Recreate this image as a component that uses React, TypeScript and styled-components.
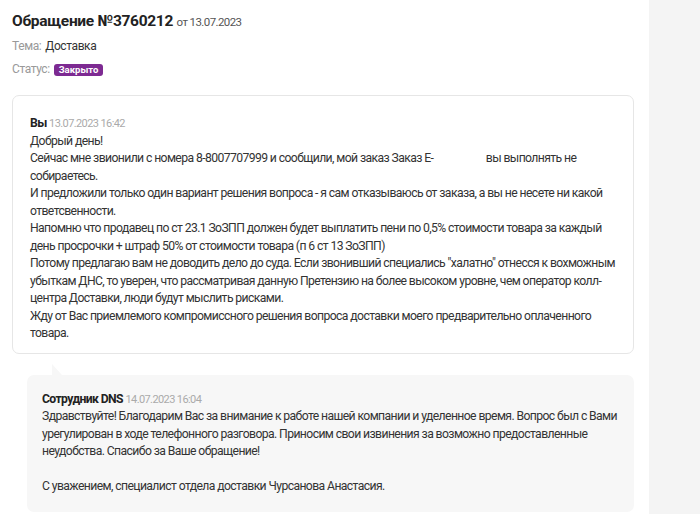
import React from 'react';
import styled, { createGlobalStyle } from 'styled-components';

const GlobalStyle = createGlobalStyle`
  html, body {
    margin: 0;
    padding: 0;
    background: #ffffff;
  }
  body {
    font-family: 'Roboto', 'Liberation Sans', sans-serif;
    color: #333333;
  }
`;

const Page = styled.div`
  display: flex;
  width: 700px;
  height: 514px;
  overflow: hidden;
`;

const Main = styled.div`
  width: 649px;
  box-sizing: border-box;
  padding: 11px 15px 0 12px;
  display: flex;
  flex-direction: column;
`;

const Sidebar = styled.div`
  flex: 1;
  background: #f4f4f4;
`;

const Title = styled.h1`
  margin: 0;
  font-size: 15.5px;
  font-weight: 700;
  letter-spacing: -0.3px;
  color: #222222;
  line-height: 20px;
`;

const TitleDate = styled.span`
  font-size: 11.5px;
  font-weight: 400;
  letter-spacing: -0.6px;
  color: #555555;
`;

const InfoRow = styled.div`
  margin-top: 6px;
  font-size: 12px;
  letter-spacing: -0.4px;
  line-height: 17px;
  color: #333333;
  display: flex;
  align-items: center;
  gap: 4px;
`;

const Label = styled.span`
  color: #999999;
`;

const Badge = styled.span`
  display: inline-block;
  background: #7d2a92;
  color: #ffffff;
  font-size: 9.5px;
  font-weight: 700;
  letter-spacing: 0;
  line-height: 12px;
  padding: 0 5px;
  border-radius: 3px;
`;

const Card = styled.div`
  margin-top: 17px;
  border: 1px solid #e6e6e6;
  border-radius: 7px;
  padding: 19px 17px 10px 17px;
  font-size: 12.2px;
  letter-spacing: -0.6px;
  line-height: 17.5px;
  color: #333333;
  white-space: nowrap;
`;

const ReplyCard = styled.div`
  position: relative;
  margin: 21px 0 0 15px;
  background: #f7f7f7;
  border-radius: 7px;
  padding: 16px 20px 16px 15px;
  font-size: 12.2px;
  letter-spacing: -0.6px;
  line-height: 17.5px;
  color: #333333;
  white-space: nowrap;

  &:before {
    content: '';
    position: absolute;
    top: -11px;
    left: 25px;
    border-bottom: 11px solid #f7f7f7;
    border-right: 10px solid transparent;
  }
`;

const Author = styled.div`
  font-weight: 700;
  color: #222222;
`;

const Time = styled.span`
  font-size: 11px;
  font-weight: 400;
  letter-spacing: -0.6px;
  color: #aaaaaa;
`;

const Line = styled.div<{ $gap?: boolean }>`
  margin-top: ${(p) => (p.$gap ? '17.5px' : '0')};
`;

const Hidden = styled.span`
  display: inline-block;
  width: 50px;
`;

const App = () => (
  <>
    <GlobalStyle />
    <Page>
      <Main>
        <Title>
          Обращение №3760212 <TitleDate>от 13.07.2023</TitleDate>
        </Title>
        <InfoRow>
          <Label>Тема:</Label> Доставка
        </InfoRow>
        <InfoRow>
          <Label>Статус:</Label> <Badge>Закрыто</Badge>
        </InfoRow>
        <Card>
          <Author>
            Вы <Time>13.07.2023 16:42</Time>
          </Author>
          <Line>Добрый день!</Line>
          <Line>
            Сейчас мне звионили с номера 8-8007707999 и сообщили, мой заказ Заказ Е-<Hidden /> вы выполнять не
            <br />
            собираетесь.
          </Line>
          <Line>
            И предложили только один вариант решения вопроса - я сам отказываюсь от заказа, а вы не несете ни какой
            <br />
            ответсвенности.
          </Line>
          <Line>
            Напомню что продавец по ст 23.1 ЗоЗПП должен будет выплатить пени по 0,5% стоимости товара за каждый
            <br />
            день просрочки + штраф 50% от стоимости товара (п 6 ст 13 ЗоЗПП)
          </Line>
          <Line>
            Потому предлагаю вам не доводить дело до суда. Если звонивший специались "халатно" отнесся к вохможным
            <br />
            убыткам ДНС, то уверен, что рассматривая данную Претензию на более высоком уровне, чем оператор колл-
            <br />
            центра Доставки, люди будут мыслить рисками.
          </Line>
          <Line>
            Жду от Вас приемлемого компромиссного решения вопроса доставки моего предварительно оплаченного
            <br />
            товара.
          </Line>
        </Card>
        <ReplyCard>
          <Author>
            Сотрудник DNS <Time>14.07.2023 16:04</Time>
          </Author>
          <Line>
            Здравствуйте! Благодарим Вас за внимание к работе нашей компании и уделенное время. Вопрос был с Вами
            <br />
            урегулирован в ходе телефонного разговора. Приносим свои извинения за возможно предоставленные
            <br />
            неудобства. Спасибо за Ваше обращение!
          </Line>
          <Line $gap>С уважением, специалист отдела доставки Чурсанова Анастасия.</Line>
        </ReplyCard>
      </Main>
      <Sidebar />
    </Page>
  </>
);

export default App;
